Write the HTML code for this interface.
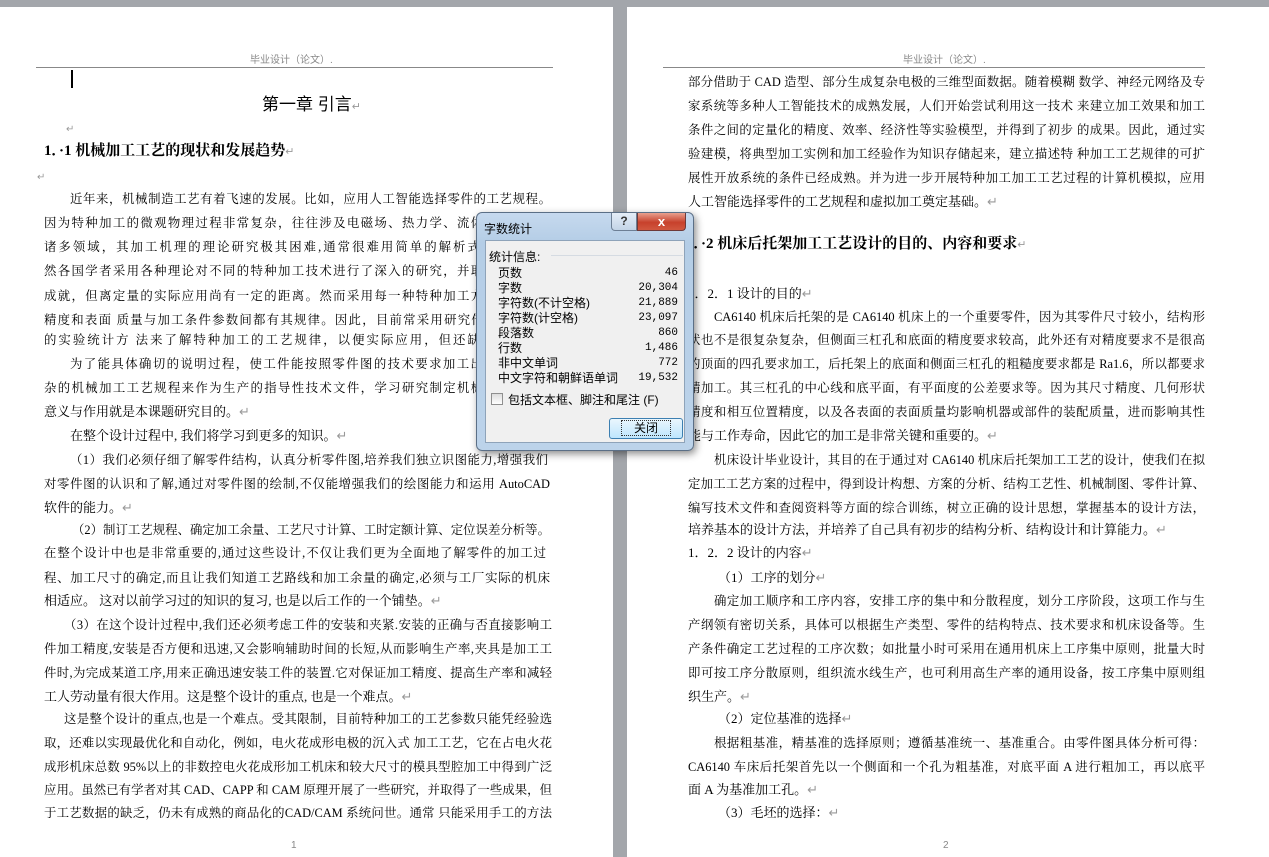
<!DOCTYPE html>
<html><head><meta charset="utf-8">
<style>
*{margin:0;padding:0;box-sizing:border-box}
body{width:1269px;height:851px;background:#a3a6ab;position:relative;overflow:hidden;font-family:"Liberation Serif","Noto Serif CJK SC","Noto Sans CJK SC",serif;color:#000}
.pg{position:absolute;top:7px;background:#fff;height:850px}
.l{position:absolute;font-size:13px;line-height:16px;white-space:nowrap;height:16px}
.j{text-align:justify;text-align-last:justify;white-space:normal;overflow:hidden;font-size:12.4px}
.hd{position:absolute;font-size:10px;color:#888;font-family:"Liberation Sans","Noto Sans CJK SC",sans-serif}
.hl{position:absolute;height:1px;background:#888;top:67px}
.h2{font-weight:bold;font-size:15px;font-family:"Liberation Serif","Noto Serif CJK SC",serif}
.r{color:#999}
.dlg{position:absolute;left:476px;top:212px;width:218px;height:239px;border:1px solid #5b6f86;border-radius:6px;background:linear-gradient(#c6d9ee,#b4cde6 30px,#bcd3ea);box-shadow:2px 3px 8px rgba(0,0,0,.45);font-family:"Liberation Sans","Noto Sans CJK SC",sans-serif;font-size:12px}
.in{position:absolute;left:8px;top:27px;width:200px;height:203px;background:#f0f0f0;border:1px solid #8ea3b9}
.row{position:absolute;left:12px;width:180px;height:15px;line-height:15px}
.row span{position:absolute;right:0;font-family:"Liberation Mono",monospace;font-size:11px}
</style></head><body>
<div class="pg" style="left:0;width:613px"></div>
<div class="pg" style="left:627px;width:642px"></div>

<div class="hd" style="left:250px;top:51px">毕业设计（论文）.</div>
<div class="hl" style="left:36px;width:517px"></div>
<div style="position:absolute;left:71px;top:70px;width:2px;height:18px;background:#000"></div>
<div class="l" style="left:262px;top:95px;font-size:17px;line-height:20px;height:20px;font-family:'Liberation Sans','Noto Sans CJK SC',sans-serif">第一章 引言<span class="r" style="font-size:11px">↵</span></div>
<div class="l r" style="left:66px;top:122px;font-size:10px">↵</div>
<div class="l h2" style="left:44px;top:143px;height:18px">1．·1 机械加工工艺的现状和发展趋势<span class="r" style="font-weight:normal;font-size:11px">↵</span></div>
<div class="l r" style="left:37px;top:170px;font-size:10px">↵</div>

<div class="l j" style="left:70px;top:191px;width:481px">近年来，机械制造工艺有着飞速的发展。比如，应用人工智能选择零件的工艺规程。</div>
<div class="l j" style="left:44px;top:215px;width:508px">因为特种加工的微观物理过程非常复杂，往往涉及电磁场、热力学、流体力学等学科</div>
<div class="l j" style="left:44px;top:239px;width:508px">诸多领域，其加工机理的理论研究极其困难,通常很难用简单的解析式来表达。虽</div>
<div class="l j" style="left:44px;top:263px;width:508px">然各国学者采用各种理论对不同的特种加工技术进行了深入的研究，并取得了很大的</div>
<div class="l j" style="left:44px;top:288px;width:508px">成就，但离定量的实际应用尚有一定的距离。然而采用每一种特种加工方法，其加工</div>
<div class="l j" style="left:44px;top:312px;width:508px">精度和表面 质量与加工条件参数间都有其规律。因此，目前常采用研究传统切削加工</div>
<div class="l j" style="left:44px;top:332px;width:508px">的实验统计方 法来了解特种加工的工艺规律，以便实际应用，但还缺乏系统性。</div>
<div class="l j" style="left:70px;top:356px;width:482px">为了能具体确切的说明过程，使工件能按照零件图的技术要求加工出来，需要复</div>
<div class="l j" style="left:44px;top:380px;width:508px">杂的机械加工工艺规程来作为生产的指导性技术文件，学习研究制定机械加工工艺的</div>
<div class="l" style="left:44px;top:404px">意义与作用就是本课题研究目的。<span class="r">↵</span></div>
<div class="l" style="left:70px;top:428px">在整个设计过程中, 我们将学习到更多的知识。<span class="r">↵</span></div>
<div class="l j" style="left:70px;top:452px;width:478px">（1）我们必须仔细了解零件结构，认真分析零件图,培养我们独立识图能力,增强我们</div>
<div class="l j" style="left:44px;top:476px;width:506px">对零件图的认识和了解,通过对零件图的绘制,不仅能增强我们的绘图能力和运用 AutoCAD</div>
<div class="l" style="left:44px;top:500px">软件的能力。<span class="r">↵</span></div>
<div class="l j" style="left:72px;top:522px;width:478px">（2）制订工艺规程、确定加工余量、工艺尺寸计算、工时定额计算、定位误差分析等。</div>
<div class="l j" style="left:44px;top:545px;width:502px">在整个设计中也是非常重要的,通过这些设计,不仅让我们更为全面地了解零件的加工过</div>
<div class="l j" style="left:44px;top:570px;width:506px">程、加工尺寸的确定,而且让我们知道工艺路线和加工余量的确定,必须与工厂实际的机床</div>
<div class="l" style="left:44px;top:593px">相适应。  这对以前学习过的知识的复习, 也是以后工作的一个铺垫。<span class="r">↵</span></div>
<div class="l j" style="left:64px;top:617px;width:488px">（3）在这个设计过程中,我们还必须考虑工件的安装和夹紧.安装的正确与否直接影响工</div>
<div class="l j" style="left:44px;top:641px;width:508px">件加工精度,安装是否方便和迅速,又会影响辅助时间的长短,从而影响生产率,夹具是加工工</div>
<div class="l j" style="left:44px;top:665px;width:508px">件时,为完成某道工序,用来正确迅速安装工件的装置.它对保证加工精度、提高生产率和减轻</div>
<div class="l" style="left:44px;top:689px">工人劳动量有很大作用。这是整个设计的重点, 也是一个难点。<span class="r">↵</span></div>
<div class="l j" style="left:64px;top:711px;width:488px">这是整个设计的重点,也是一个难点。受其限制，目前特种加工的工艺参数只能凭经验选</div>
<div class="l j" style="left:44px;top:735px;width:508px">取，还难以实现最优化和自动化，例如，电火花成形电极的沉入式 加工工艺，它在占电火花</div>
<div class="l j" style="left:44px;top:759px;width:508px">成形机床总数 95%以上的非数控电火花成形加工机床和较大尺寸的模具型腔加工中得到广泛</div>
<div class="l j" style="left:44px;top:782px;width:508px">应用。虽然已有学者对其 CAD、CAPP 和 CAM 原理开展了一些研究，并取得了一些成果，但由</div>
<div class="l j" style="left:44px;top:805px;width:508px">于工艺数据的缺乏，仍未有成熟的商品化的CAD/CAM 系统问世。通常 只能采用手工的方法或</div>
<div class="hd" style="left:291px;top:840px">1</div>

<div class="hd" style="left:903px;top:51px">毕业设计（论文）.</div>
<div class="hl" style="left:663px;width:542px"></div>
<div class="l j" style="left:688px;top:74px;width:517px">部分借助于 CAD 造型、部分生成复杂电极的三维型面数据。随着模糊 数学、神经元网络及专</div>
<div class="l j" style="left:688px;top:98px;width:517px">家系统等多种人工智能技术的成熟发展，人们开始尝试利用这一技术 来建立加工效果和加工</div>
<div class="l j" style="left:688px;top:122px;width:517px">条件之间的定量化的精度、效率、经济性等实验模型，并得到了初步 的成果。因此，通过实</div>
<div class="l j" style="left:688px;top:146px;width:517px">验建模，将典型加工实例和加工经验作为知识存储起来，建立描述特 种加工工艺规律的可扩</div>
<div class="l j" style="left:688px;top:170px;width:517px">展性开放系统的条件已经成熟。并为进一步开展特种加工加工工艺过程的计算机模拟，应用</div>
<div class="l" style="left:688px;top:194px">人工智能选择零件的工艺规程和虚拟加工奠定基础。<span class="r">↵</span></div>
<div class="l h2" style="left:686px;top:236px;height:18px">1．·2 机床后托架加工工艺设计的目的、内容和要求<span class="r" style="font-weight:normal;font-size:11px">↵</span></div>
<div class="l" style="left:688px;top:286px">1．2．1 设计的目的<span class="r">↵</span></div>
<div class="l j" style="left:714px;top:309px;width:491px">CA6140 机床后托架的是 CA6140 机床上的一个重要零件，因为其零件尺寸较小，结构形</div>
<div class="l j" style="left:688px;top:332px;width:517px">状也不是很复杂复杂，但侧面三杠孔和底面的精度要求较高，此外还有对精度要求不是很高</div>
<div class="l j" style="left:688px;top:356px;width:517px">的顶面的四孔要求加工，后托架上的底面和侧面三杠孔的粗糙度要求都是 Ra1.6，所以都要求</div>
<div class="l j" style="left:688px;top:380px;width:517px">精加工。其三杠孔的中心线和底平面，有平面度的公差要求等。因为其尺寸精度、几何形状</div>
<div class="l j" style="left:688px;top:404px;width:517px">精度和相互位置精度，以及各表面的表面质量均影响机器或部件的装配质量，进而影响其性</div>
<div class="l" style="left:688px;top:428px">能与工作寿命，因此它的加工是非常关键和重要的。<span class="r">↵</span></div>
<div class="l j" style="left:714px;top:452px;width:491px">机床设计毕业设计，其目的在于通过对 CA6140 机床后托架加工工艺的设计，使我们在拟</div>
<div class="l j" style="left:688px;top:476px;width:517px">定加工工艺方案的过程中，得到设计构想、方案的分析、结构工艺性、机械制图、零件计算、</div>
<div class="l j" style="left:688px;top:500px;width:517px">编写技术文件和查阅资料等方面的综合训练，树立正确的设计思想，掌握基本的设计方法，</div>
<div class="l" style="left:688px;top:522px">培养基本的设计方法，并培养了自己具有初步的结构分析、结构设计和计算能力。<span class="r">↵</span></div>
<div class="l" style="left:688px;top:545px">1．2．2 设计的内容<span class="r">↵</span></div>
<div class="l" style="left:718px;top:570px">（1）工序的划分<span class="r">↵</span></div>
<div class="l j" style="left:714px;top:593px;width:491px">确定加工顺序和工序内容，安排工序的集中和分散程度，划分工序阶段，这项工作与生</div>
<div class="l j" style="left:688px;top:617px;width:517px">产纲领有密切关系，具体可以根据生产类型、零件的结构特点、技术要求和机床设备等。生</div>
<div class="l j" style="left:688px;top:641px;width:517px">产条件确定工艺过程的工序次数；如批量小时可采用在通用机床上工序集中原则，批量大时</div>
<div class="l j" style="left:688px;top:665px;width:517px">即可按工序分散原则，组织流水线生产，也可利用高生产率的通用设备，按工序集中原则组</div>
<div class="l" style="left:688px;top:689px">织生产。<span class="r">↵</span></div>
<div class="l" style="left:718px;top:711px">（2）定位基准的选择<span class="r">↵</span></div>
<div class="l j" style="left:714px;top:735px;width:491px">根据粗基准，精基准的选择原则；遵循基准统一、基准重合。由零件图具体分析可得：</div>
<div class="l j" style="left:688px;top:759px;width:517px">CA6140 车床后托架首先以一个侧面和一个孔为粗基准，对底平面 A 进行粗加工，再以底平</div>
<div class="l" style="left:688px;top:782px">面 A 为基准加工孔。<span class="r">↵</span></div>
<div class="l" style="left:718px;top:805px">（3）毛坯的选择：<span class="r">↵</span></div>
<div class="hd" style="left:943px;top:840px">2</div>

<div class="dlg">
  <div style="position:absolute;left:7px;top:7px;font-size:12px">字数统计</div>
  <div style="position:absolute;left:134px;top:0;width:26px;height:18px;border:1px solid #6d7f95;border-top:none;border-radius:0 0 0 4px;background:linear-gradient(#e4edf7,#c3d4e7);text-align:center;font-size:12px;font-weight:bold;color:#333;line-height:17px">?</div>
  <div style="position:absolute;left:160px;top:0;width:49px;height:18px;border:1px solid #6d3a3a;border-top:none;border-radius:0 0 4px 0;background:linear-gradient(#e8a08e,#c7412c 55%,#d1573f);text-align:center;color:#fff;font-weight:bold;font-size:13px;line-height:17px">x</div>
  <div class="in">
    <div style="position:absolute;left:3px;top:7px">统计信息:</div>
    <div style="position:absolute;left:65px;top:14px;width:132px;height:1px;background:#d5dbe2"></div>
    <div class="row" style="top:25px">页数<span>46</span></div>
    <div class="row" style="top:40px">字数<span>20,304</span></div>
    <div class="row" style="top:55px">字符数(不计空格)<span>21,889</span></div>
    <div class="row" style="top:70px">字符数(计空格)<span>23,097</span></div>
    <div class="row" style="top:85px">段落数<span>860</span></div>
    <div class="row" style="top:100px">行数<span>1,486</span></div>
    <div class="row" style="top:115px">非中文单词<span>772</span></div>
    <div class="row" style="top:130px">中文字符和朝鲜语单词<span>19,532</span></div>
    <div style="position:absolute;left:5px;top:152px;width:12px;height:12px;border:1px solid #8f8f8f;background:linear-gradient(#ddd,#fff)"></div>
    <div style="position:absolute;left:22px;top:150px">包括文本框、脚注和尾注 (F)</div>
    <div style="position:absolute;left:123px;top:177px;width:74px;height:21px;border:1px solid #3c7fb1;border-radius:3px;background:linear-gradient(#eaf6fd,#bee6fd);text-align:center;line-height:19px"><span style="border:1px dotted #333;padding:0 12px">关闭</span></div>
  </div>
</div>
</body></html>
